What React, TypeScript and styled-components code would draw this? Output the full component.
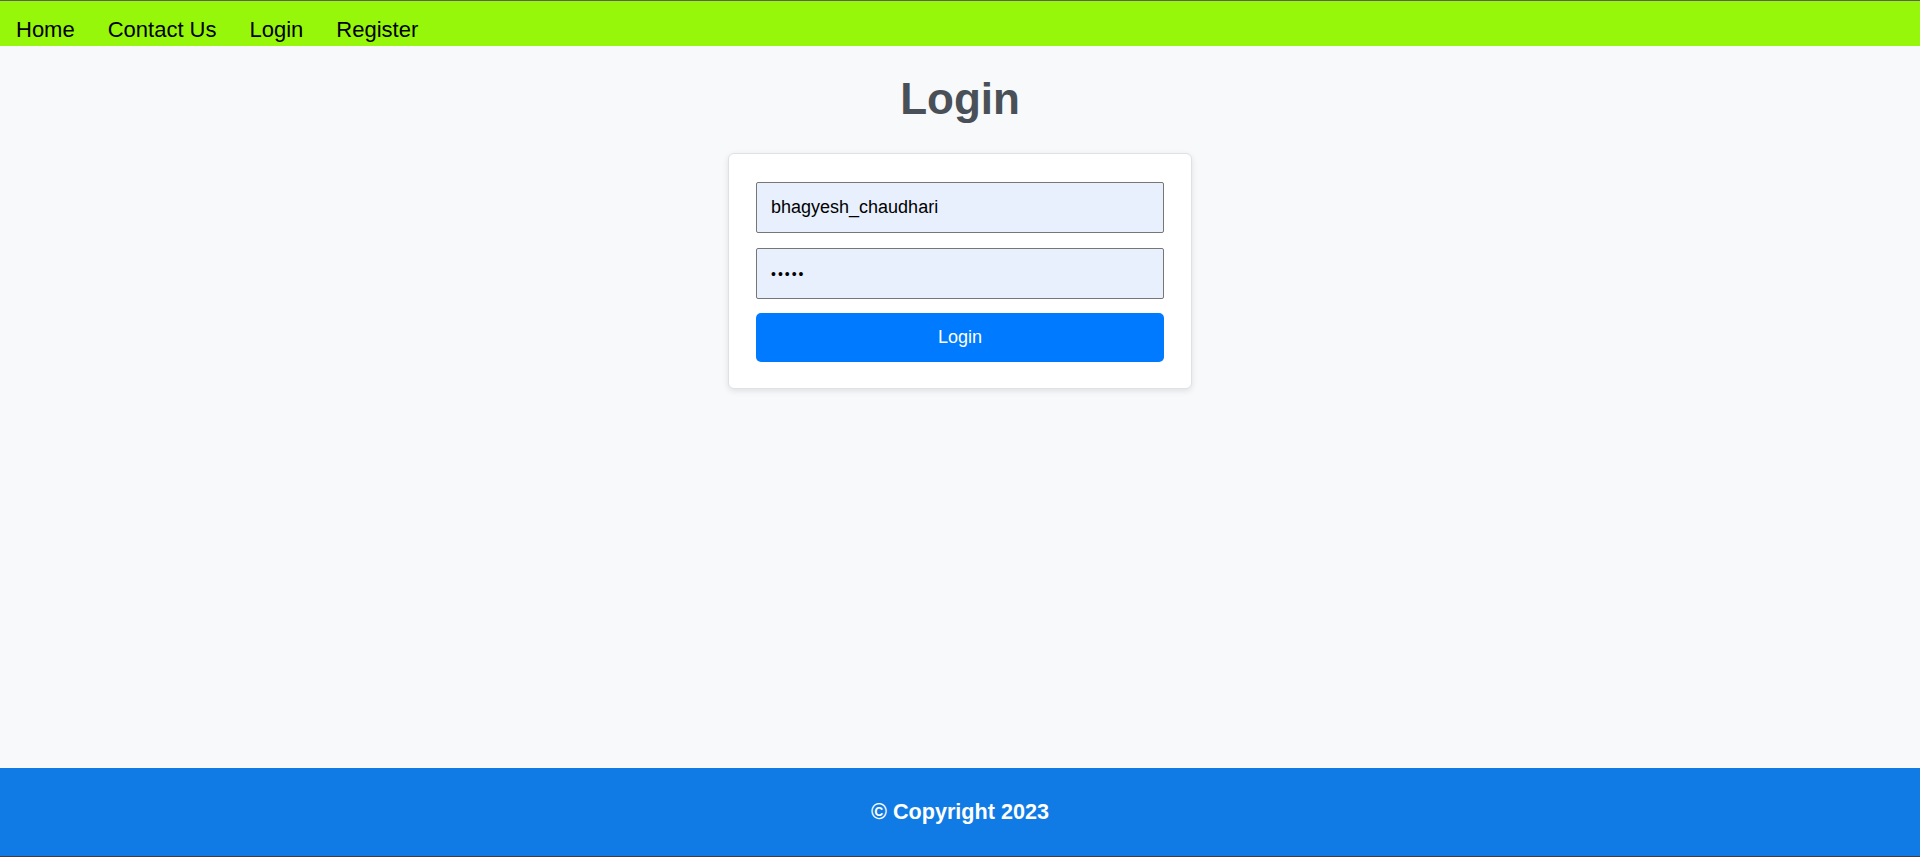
import React from 'react'
import styled, {createGlobalStyle} from 'styled-components'

const GlobalStyle = createGlobalStyle`
  html, body {
    margin: 0;
    padding: 0;
    background: #f8f9fa;
    font-family: 'Liberation Sans', Arial, sans-serif;
  }
  * {
    box-sizing: border-box;
  }
`

type NavLinkProps = {
  label: string;
}

function NavLink (props: NavLinkProps) {
  return <NavItem href="#">{props.label}</NavItem>
}

function App () {
  const links = ['Home', 'Contact Us', 'Login', 'Register']
  return (
    <>
      <GlobalStyle />
      <Page>
        <NavBar>
          {links.map((l) => <NavLink key={l} label={l} />)}
        </NavBar>
        <Main>
          <Title>Login</Title>
          <Card>
            <Field type="text" defaultValue="bhagyesh_chaudhari" />
            <Field type="password" defaultValue="12345" />
            <SubmitButton type="button">Login</SubmitButton>
          </Card>
        </Main>
        <Footer>© Copyright 2023</Footer>
      </Page>
    </>
  )
}

export default App

const Page = styled.div`
  min-height: 100vh;
  display: flex;
  flex-direction: column;
`

const NavBar = styled.nav`
  display: flex;
  gap: 1px;
  background: #97f70b;
  border-top: 1px solid #5f5f5f;
  padding: 16px 0 4px;
`

const NavItem = styled.a`
  padding: 0 16px;
  font-size: 22px;
  line-height: 25px;
  color: #000;
  text-decoration: none;
`

const Main = styled.main`
  flex: 1;
  display: flex;
  flex-direction: column;
  align-items: center;
`

const Title = styled.h1`
  margin: 27px 0 28px;
  font-size: 44px;
  line-height: 52px;
  font-weight: bold;
  color: #495057;
`

const Card = styled.form`
  width: 464px;
  background: #fff;
  border: 1px solid #dee2e6;
  border-radius: 6px;
  box-shadow: 0 2px 6px rgba(0, 0, 0, 0.1);
  padding: 28px 27px 26px;
  display: flex;
  flex-direction: column;
`

const Field = styled.input`
  height: 51px;
  width: 100%;
  margin-bottom: 15px;
  padding: 0 14px;
  background: #e8f0fe;
  border: 1px solid #767676;
  border-radius: 2px;
  font-family: 'Liberation Sans', Arial, sans-serif;
  font-size: 18px;
  color: #000;
  outline: none;
  &[type='password'] {
    margin-bottom: 14px;
    font-size: 14px;
    letter-spacing: 2px;
  }
`

const SubmitButton = styled.button`
  height: 49px;
  width: 100%;
  border: none;
  border-radius: 5px;
  background: #007bff;
  color: #fff;
  font-family: 'Liberation Sans', Arial, sans-serif;
  font-size: 18px;
  cursor: pointer;
`

const Footer = styled.footer`
  height: 89px;
  display: flex;
  align-items: center;
  justify-content: center;
  background: #107be5;
  border-bottom: 1px solid #3c4043;
  color: #fff;
  font-size: 21.6px;
  font-weight: bold;
`
